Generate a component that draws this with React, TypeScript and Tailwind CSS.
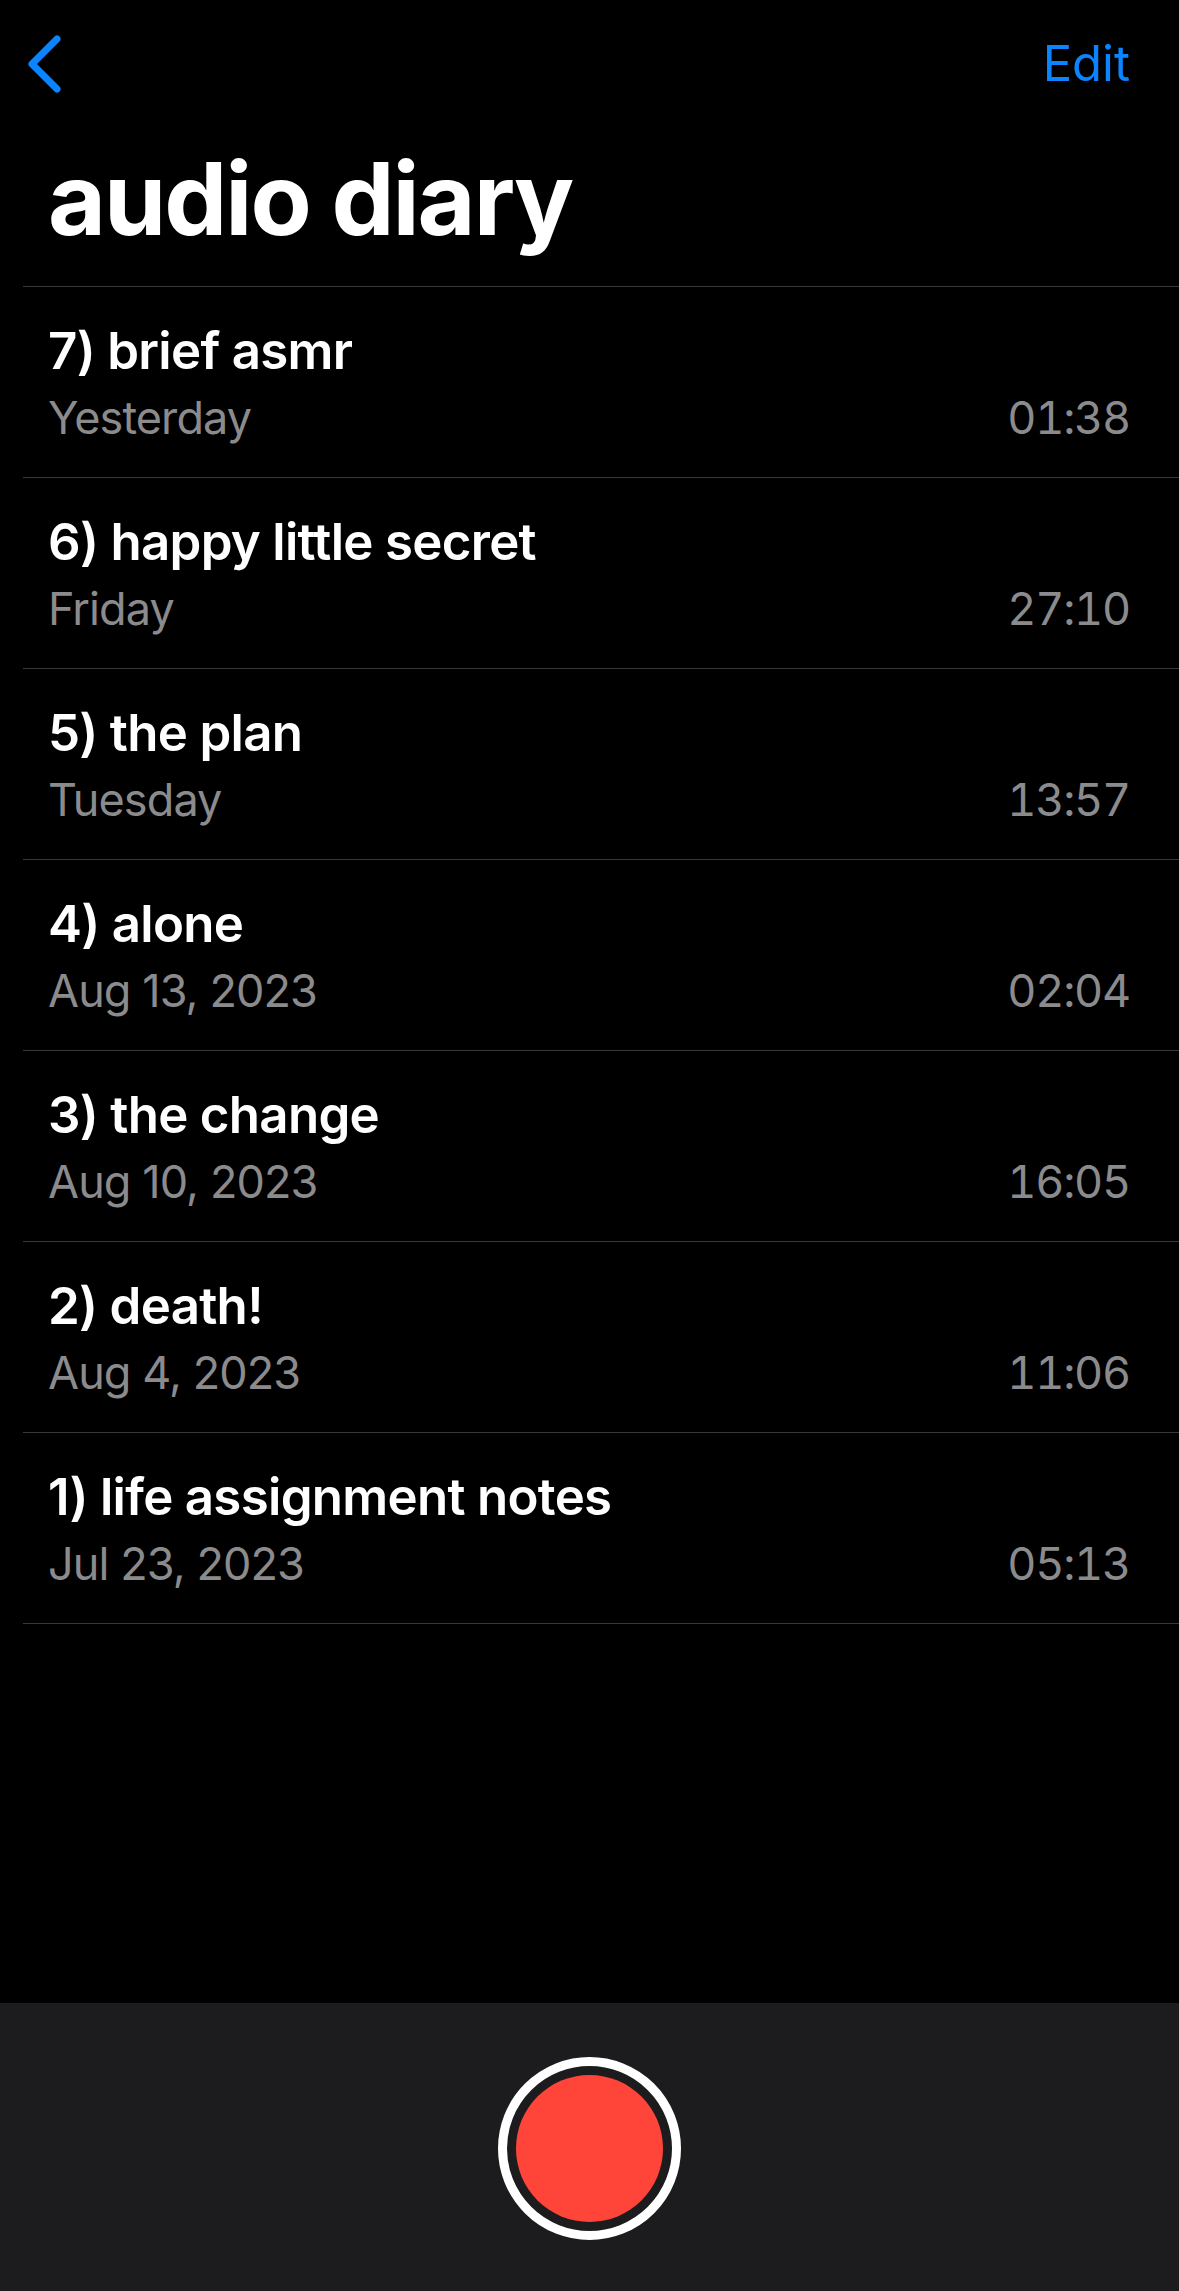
const rows = [
  { title: "7) brief asmr", date: "Yesterday", time: "01:38" },
  { title: "6) happy little secret", date: "Friday", time: "27:10" },
  { title: "5) the plan", date: "Tuesday", time: "13:57" },
  { title: "4) alone", date: "Aug 13, 2023", time: "02:04" },
  { title: "3) the change", date: "Aug 10, 2023", time: "16:05" },
  { title: "2) death!", date: "Aug 4, 2023", time: "11:06" },
  { title: "1) life assignment notes", date: "Jul 23, 2023", time: "05:13" },
];

export default function App() {
  return (
    <div className="flex h-[2291px] w-[1179px] flex-col overflow-hidden bg-black font-['Inter',sans-serif] text-white">
      <header className="h-[286px] shrink-0">
        <div className="flex h-[139px] items-start justify-between pl-[27px] pr-[49px] pt-[34px]">
          <svg width="36" height="60" viewBox="0 0 36 60" fill="none" className="block">
            <path d="M30 5 L5 30 L30 55" stroke="#0a84ff" strokeWidth="7" strokeLinecap="round" strokeLinejoin="round" />
          </svg>
          <span className="text-[49px] leading-[60px] text-[#0a84ff]">Edit</span>
        </div>
        <h1 className="pl-[48px] text-[100px] font-bold leading-[120px] tracking-[-2px]">audio diary</h1>
      </header>
      <ul className="ml-[23px] shrink-0 border-t border-t-[#38383a]">
        {rows.map((r) => (
          <li key={r.title} className="flex h-[191px] flex-col border-b border-b-[#38383a] pl-[25px] pr-[49px] pt-[34px]">
            <div className="text-[51px] font-semibold leading-[60px] tracking-[-0.7px]">{r.title}</div>
            <div className="mt-[7px] flex items-baseline justify-between text-[45px] leading-[60px] text-[#8b8b8d]">
              <span className="tracking-[-0.9px]">{r.date}</span>
              <span className="tracking-[-1.2px] [font-variant-numeric:tabular-nums]">{r.time}</span>
            </div>
          </li>
        ))}
      </ul>
      <div className="flex-1" />
      <footer className="flex h-[288px] shrink-0 justify-center bg-[#1c1c1e] pt-[54px]">
        <div className="flex h-[183px] w-[183px] items-center justify-center rounded-full border-[9px] border-white">
          <div className="h-[147px] w-[147px] rounded-full bg-[#ff453a]" />
        </div>
      </footer>
    </div>
  );
}
